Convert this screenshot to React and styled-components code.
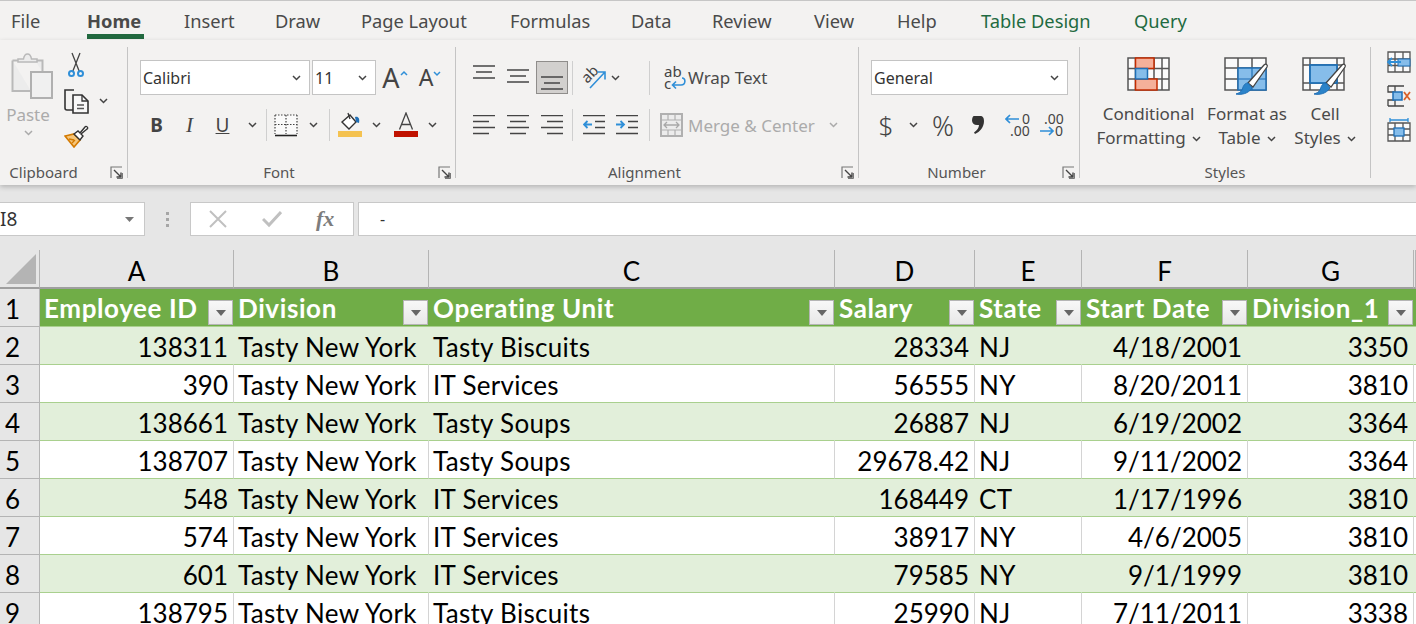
import React from "react"
import styled, { createGlobalStyle } from "styled-components"

const GlobalStyle = createGlobalStyle`
  html, body {
    margin: 0;
    padding: 0;
    background: #fff;
  }
  body {
    font-family: "Noto Sans", "Open Sans", sans-serif;
  }
`

const ink = "#444"
const blue = "#2f8fd8"

const Page = styled.div`
  width: 1416px;
  height: 624px;
  overflow: hidden;
  display: flex;
  flex-direction: column;
`

/* tabs */

const TabBar = styled.nav`
  flex: none;
  display: flex;
  height: 38px;
  padding-top: 1px;
  padding-left: 11px;
  background: #f3f2f1;
  border-top: 1px solid #c6c6c6;
`

const Tab = styled.div`
  position: relative;
  width: ${({ $w }) => $w}px;
  flex: none;
  font-size: 18.3px;
  line-height: 38px;
  height: 38px;
  white-space: nowrap;
  color: ${({ $green }) => ($green ? "#1f6b41" : "#4a4a4a")};
  font-weight: ${({ $active }) => ($active ? 700 : 400)};

  ${({ $active }) =>
    $active &&
    `&::after {
      content: "";
      position: absolute;
      left: 0;
      top: 32px;
      width: 57px;
      height: 5px;
      background: #21693f;
    }`}
`

/* ribbon */

const Ribbon = styled.div`
  flex: none;
  display: flex;
  height: 145px;
  background: #f3f2f1;
  position: relative;
  z-index: 2;
  box-shadow: 0 2px 5px rgba(0, 0, 0, 0.22);
`

const Group = styled.section`
  position: relative;
  flex: none;
  width: ${({ $w }) => $w}px;
  height: 131px;
  margin-top: 7px;
  display: flex;
  flex-direction: column;
  border-right: ${({ $last }) => ($last ? "none" : "1px solid #c4c4c4")};
  box-sizing: border-box;
`

const GroupBody = styled.div`
  flex: 1;
  display: flex;
  min-height: 0;
  padding-left: ${({ $pl }) => $pl || 0}px;
`

const GroupLabel = styled.div`
  height: 20px;
  margin-bottom: -4px;
  padding-right: ${({ $pr }) => $pr || 0}px;
  font-size: 15px;
  line-height: 20px;
  text-align: center;
  color: #555;
`

const Launcher = styled.span`
  position: absolute;
  right: 4px;
  top: 119px;
  display: flex;
`

const Stack = styled.div`
  display: flex;
  flex-direction: column;
  padding-top: ${({ $pt }) => $pt || 0}px;
  padding-left: ${({ $pl }) => $pl || 0}px;
  margin-top: ${({ $mt }) => $mt || 0}px;
`

const Row = styled.div`
  display: flex;
  align-items: center;
  height: ${({ $h }) => $h}px;
  margin-bottom: ${({ $mb }) => $mb || 0}px;
`

const Slot = styled.div`
  flex: none;
  width: ${({ $w }) => $w}px;
  display: flex;
  align-items: center;
  justify-content: center;
  color: ${ink};

  svg {
    flex: none;
  }
`

const Pressed = styled(Slot)`
  height: 33px;
  background: #d2d0ce;
  box-sizing: border-box;
  border: 1px solid #8f8d8b;
`

const RuleV = styled.div`
  flex: none;
  width: 1px;
  height: ${({ $h }) => $h || 32}px;
  background: #cfcfcf;
`

const ComboBox = styled.div`
  flex: none;
  width: ${({ $w }) => $w}px;
  height: 35px;
  margin-right: ${({ $mr }) => $mr || 0}px;
  box-sizing: border-box;
  background: #fff;
  border: 1px solid #c4c4c4;
  display: flex;
  align-items: center;
  justify-content: space-between;
  padding: 0 8px 0 2px;
  font-size: 16px;
  color: #333;
`

const RibbonText = styled.span`
  flex: none;
  margin-left: ${({ $ml }) => $ml || 0}px;
  font-size: 17px;
  color: ${({ $muted }) => ($muted ? "#ababab" : "#4a4a4a")};
  white-space: nowrap;
  line-height: 1;
`

const FontGlyph = styled.span`
  font-family: ${({ $serif }) => ($serif ? '"Liberation Serif", serif' : '"Noto Sans", sans-serif')};
  font-size: ${({ $size }) => $size}px;
  font-weight: ${({ $bold, $light }) => ($bold ? 700 : $light ? 300 : 400)};
  font-style: ${({ $italic }) => ($italic ? "italic" : "normal")};
  text-decoration: ${({ $under }) => ($under ? "underline" : "none")};
  color: #444;
  line-height: 1;
`

const PasteColumn = styled.div`
  flex: none;
  width: 56px;
  display: flex;
  flex-direction: column;
  align-items: center;
  padding-top: 6px;
  gap: 7px;
`

const PasteGlyph = styled.div`
  display: flex;
  margin-left: 8px;
`

const BigButton = styled.div`
  flex: none;
  width: ${({ $w }) => $w}px;
  display: flex;
  flex-direction: column;
  align-items: center;
  padding-top: 10px;
`

const BigLabel = styled.div`
  margin-top: ${({ $mt }) => $mt}px;
  font-size: 17px;
  line-height: 24px;
  color: #4a4a4a;
  text-align: center;
  white-space: nowrap;
`

const InlineChevron = styled.span`
  display: inline-flex;
  margin-left: 6px;
  vertical-align: 2px;
  line-height: 0;
`

/* formula bar */

const FormulaBar = styled.div`
  flex: none;
  display: flex;
  align-items: center;
  height: 65px;
  padding-top: 3px;
  box-sizing: border-box;
  background: #e6e6e6;
`

const NameBox = styled.div`
  flex: none;
  width: 146px;
  height: 34px;
  margin-left: -1px;
  box-sizing: border-box;
  background: #fff;
  border: 1px solid #c8c8c8;
  display: flex;
  align-items: center;
  justify-content: space-between;
  padding: 0 10px 0 0;
  font-size: 19px;
  color: #333;
`

const GripDots = styled.div`
  flex: none;
  width: 45px;
  display: flex;
  flex-direction: column;
  align-items: center;
  gap: 3px;

  i {
    width: 3px;
    height: 3px;
    background: #a6a6a6;
  }
`

const FxBox = styled.div`
  flex: none;
  width: 164px;
  height: 34px;
  box-sizing: border-box;
  background: #fff;
  border: 1px solid #c8c8c8;
  display: flex;
  align-items: center;
  padding-left: 17px;
  gap: 34px;
`

const FxGlyph = styled.span`
  font-family: "Liberation Serif", serif;
  font-style: italic;
  font-weight: 700;
  font-size: 22px;
  color: #7d7d7d;
`

const FormulaInput = styled.div`
  flex: 1;
  height: 34px;
  margin-left: 4px;
  box-sizing: border-box;
  background: #fff;
  border: 1px solid #c8c8c8;
  border-right: none;
  padding-left: 21px;
  font-size: 16px;
  line-height: 32px;
  color: #333;
`

/* sheet */

const Sheet = styled.div`
  flex: none;
  display: grid;
  grid-template-columns: 40px 194px 195px 406px 140px 107px 166px 166px 2px;
  grid-template-rows: 39px;
  grid-auto-rows: 38px;
  font-family: "Lato", "Noto Sans", sans-serif;
  font-size: 26px;
  color: #000;
  background: #fff;
`

const Corner = styled.div`
  background: #e6e6e6;
  border-right: 1px solid #b4b4b4;
  border-bottom: 2px solid #9f9f9f;
  box-sizing: border-box;
  display: flex;
  align-items: flex-end;
  justify-content: flex-end;
  padding: 0 3px 3px 0;
`

const ColHead = styled.div`
  background: #e6e6e6;
  border-right: 1px solid #b4b4b4;
  border-bottom: 2px solid #9f9f9f;
  box-sizing: border-box;
  text-align: center;
  line-height: 42px;
`

const RowHead = styled.div`
  background: #e6e6e6;
  border-right: 1px solid #b4b4b4;
  border-bottom: 1px solid #b4b4b4;
  box-sizing: border-box;
  padding-right: 14px;
  text-align: center;
  line-height: 40px;
`

const HeadCell = styled.div`
  background: #70ad47;
  color: #fff;
  font-weight: 700;
  letter-spacing: 0.6px;
  box-sizing: border-box;
  padding-left: 4px;
  display: flex;
  align-items: center;
  justify-content: space-between;
  white-space: nowrap;
  overflow: hidden;
  border-bottom: 1px solid #a9d08e;
  padding-right: 1px;
`

const FilterButton = styled.span`
  flex: none;
  width: 25px;
  height: 25px;
  margin-top: 10px;
  box-sizing: border-box;
  background: linear-gradient(#f8f8f8, #e8e8e8);
  border: 1px solid #b5b5b5;
  display: flex;
  align-items: center;
  justify-content: center;

  &::after {
    content: "";
    border-left: 5px solid transparent;
    border-right: 5px solid transparent;
    border-top: 6px solid #666;
  }
`

const Cell = styled.div`
  box-sizing: border-box;
  padding: 0 5px 0 4px;
  line-height: 40px;
  white-space: nowrap;
  overflow: hidden;
  letter-spacing: ${({ $num }) => ($num ? "0" : "0.3px")};
  text-align: ${({ $num }) => ($num ? "right" : "left")};
  background: ${({ $band }) => ($band ? "#e2efda" : "#fff")};
  border-bottom: 1px solid #a9d08e;
  border-right: 1px solid ${({ $band }) => ($band ? "#e2efda" : "#d4d4d4")};
`

/* icons */

const Chevron = ({ color = "#444", w = 9 }) => (
  <svg width={w} height="6" viewBox="0 0 9 6">
    <path d="M1 1l3.5 3.5L8 1" fill="none" stroke={color} strokeWidth="1.5" />
  </svg>
)

const LauncherIcon = () => (
  <svg width="13" height="13" viewBox="0 0 13 13">
    <path d="M1 12V1h11" fill="none" stroke="#777" strokeWidth="1.2" />
    <path d="M4 4l7 7M11 6.5V11H6.5" fill="none" stroke="#444" strokeWidth="1.4" />
    <path d="M12.5 7v5.5H7" fill="none" stroke="#777" strokeWidth="1" />
  </svg>
)

const PasteIcon = () => (
  <svg width="43" height="46" viewBox="0 0 43 46">
    <path d="M1.5 7.5h7M24 7.5h7.5V19M20 38H1.5V7.5" fill="#ececec" stroke="#b9b9b9" strokeWidth="2" />
    <path d="M7 9V6h5.5C13 3 14.5 1 16.5 1S20 3 20.5 6H26v3z" fill="#ececec" stroke="#b9b9b9" strokeWidth="1.5" />
    <rect x="20" y="19" width="21" height="26" fill="#f0f0f0" stroke="#b0b0b0" strokeWidth="2" />
  </svg>
)

const ScissorsIcon = () => (
  <svg width="18" height="26" viewBox="0 0 18 26">
    <path d="M5 1l7.5 19M13 1L5.5 20" fill="none" stroke="#444" strokeWidth="1.3" />
    <circle cx="4.5" cy="21.5" r="2.5" fill="none" stroke={blue} strokeWidth="2" />
    <circle cx="13.5" cy="21.5" r="2.5" fill="none" stroke={blue} strokeWidth="2" />
  </svg>
)

const CopyIcon = () => (
  <svg width="26" height="25" viewBox="0 0 26 25">
    <path d="M10 1H1v18a2 2 0 0 0 2 2h6" fill="none" stroke="#333" strokeWidth="1.6" />
    <path d="M9 6h9l6 6v12H9z" fill="#f8f8f8" stroke="#333" strokeWidth="1.6" />
    <path d="M18 6v6h6" fill="none" stroke="#333" strokeWidth="1.3" />
    <path d="M13 16h7M13 19.5h7" stroke="#555" strokeWidth="1.5" />
  </svg>
)

const BrushIcon = () => (
  <svg width="26" height="24" viewBox="0 0 26 24">
    <path d="M1 12l9 11 6-7-6-6z" fill="#f6c67a" stroke="#d47a00" strokeWidth="1.6" />
    <path d="M5 15l5 1M8 19l3-3" stroke="#d47a00" strokeWidth="1.3" />
    <path d="M10 10l4-3 5 5-3 4z" fill="#fff" stroke="#333" strokeWidth="1.4" />
    <path d="M16 9l5-6c1-2 4 1 2 2l-6 5" fill="#fff" stroke="#333" strokeWidth="1.4" />
  </svg>
)

const BordersIcon = () => (
  <svg width="24" height="24" viewBox="0 0 24 24">
    <rect x="1" y="2" width="22" height="20" fill="#fafafa" />
    <path d="M1 2h22M1 2v19M23 2v19M1 11.5h22M12 2v19" fill="none" stroke="#444" strokeWidth="1.2" strokeDasharray="1.5 1.5" />
    <path d="M1 22.5h22" stroke="#222" strokeWidth="1.6" />
  </svg>
)

const FillIcon = () => (
  <svg width="26" height="26" viewBox="0 0 26 26">
    <path d="M5 10l8-7 6 7-7 7z" fill="#fff" stroke="#333" strokeWidth="1.4" />
    <path d="M11 1l2 6" stroke="#333" strokeWidth="1.3" />
    <path d="M18 5c3-1 5 1 4 6l-3-1z" fill="#1f6fb5" />
    <rect x="1" y="19" width="24" height="6" fill="#f4c250" />
  </svg>
)

const FontColorIcon = () => (
  <svg width="26" height="26" viewBox="0 0 26 26">
    <path d="M6.5 17.5L13 1l6.5 16.5M8.5 12.5h9" fill="none" stroke="#444" strokeWidth="1.3" />
    <rect x="1" y="19" width="24" height="6" fill="#c01200" />
  </svg>
)

const Lines = ({ rows, h = 20 }) => (
  <svg width="22" height={h} viewBox={`0 0 22 ${h}`}>
    {rows.map(([x1, x2, y], i) => (
      <path key={i} d={`M${x1} ${y}H${x2}`} stroke="#444" strokeWidth="1.5" />
    ))}
  </svg>
)

const OrientationIcon = () => (
  <svg width="28" height="28" viewBox="0 0 28 28">
    <text x="0" y="15" fontFamily="Noto Sans, sans-serif" fontSize="15" fill="#444" transform="rotate(-45 9 10)">ab</text>
    <path d="M9 24L24 8M16.5 8H24v7.5" fill="none" stroke={blue} strokeWidth="1.6" />
  </svg>
)

const IndentIcon = ({ out }) => (
  <svg width="22" height="20" viewBox="0 0 22 20">
    <path d="M0 .5h22M12 6.5h10M12 12.5h10M0 18.5h22" stroke="#444" strokeWidth="1.5" />
    <path d={out ? "M9 9.5H1M4.5 6L1 9.5 4.5 13" : "M0 9.5h8M4.5 6L8 9.5 4.5 13"} fill="none" stroke={blue} strokeWidth="1.8" />
  </svg>
)

const WrapIcon = () => (
  <svg width="24" height="26" viewBox="0 0 24 26">
    <text x="1" y="12" fontFamily="Noto Sans, sans-serif" fontSize="15" fill="#444">ab</text>
    <text x="1" y="24" fontFamily="Noto Sans, sans-serif" fontSize="15" fill="#444">c</text>
    <path d="M19 13c4 0 4 7-1 7h-8M13 16.5L9.5 20l3.5 3.500" fill="none" stroke={blue} strokeWidth="1.6" />
  </svg>
)

const MergeIcon = () => (
  <svg width="23" height="24" viewBox="0 0 23 24">
    <rect x="1" y="1" width="21" height="22" fill="#ececec" stroke="#b0b0b0" strokeWidth="2" />
    <path d="M1 7h21M1 17h21M8 1v6M15 1v6M8 17v6M15 17v6" stroke="#b0b0b0" strokeWidth="1.2" />
    <path d="M4 12h15M7 9l-3 3 3 3M16 9l3 3-3 3" fill="none" stroke="#a8a8a8" strokeWidth="1.3" />
  </svg>
)

const CommaIcon = () => (
  <svg width="14" height="20" viewBox="0 0 14 20">
    <path d="M3 1h6c3 0 4 2 4 5 0 6-4 11-9 13l-1-1.5c3-2 5-5 5-7.500H6C3 10 1 8 1 5.500S2 1 3 1z" fill="#333" />
  </svg>
)

const DecimalIcon = ({ more }) => (
  <svg width="26" height="26" viewBox="0 0 26 26">
    <text x={more ? 5 : 17} y="12" fontFamily="Noto Sans, sans-serif" fontSize="14" fill="#444">{more ? ".00" : "0"}</text>
    <text x={more ? 16 : 5} y="24" fontFamily="Noto Sans, sans-serif" fontSize="14" fill="#444">{more ? "0" : ".00"}</text>
    {more ? (
      <path d="M1 19h13M10 15l4 4-4 4" fill="none" stroke={blue} strokeWidth="1.7" />
    ) : (
      <path d="M14 7H1M5 3L1 7l4 4" fill="none" stroke={blue} strokeWidth="1.7" />
    )}
  </svg>
)

const GridFrame = ({ w, h, xs, ys }) => (
  <g fill="none" stroke="#555" strokeWidth="1.5">
    <rect x="1" y="1" width={w} height={h} fill="#fafafa" />
    {xs.map((x) => (
      <path key={x} d={`M${x} 1v${h}`} />
    ))}
    {ys.map((y) => (
      <path key={y} d={`M1 ${y}h${w}`} />
    ))}
  </g>
)

const PaintBrush = () => (
  <g>
    <path d="M24 26L40 8c2-2 4 0 3 2L29 30z" fill="#fff" stroke="#444" strokeWidth="1.3" />
    <path d="M12 37c5 1 12 0 16-6l-4-5c-4 0-5 4-6 7-1 2-3 3-6 4z" fill="#2b83c9" stroke="#1f6fb5" />
  </g>
)

const ConditionalIcon = () => (
  <svg width="44" height="36" viewBox="0 0 44 36">
    <GridFrame w={41} h={32} xs={[8.5, 27, 35]} ys={[11.5, 22]} />
    <rect x="8.5" y="1" width="18.5" height="10.5" fill="#f5b09a" stroke="#c22b00" strokeWidth="1.5" />
    <rect x="8.5" y="22" width="21.5" height="11" fill="#f5b09a" stroke="#c22b00" strokeWidth="1.5" />
    <rect x="8.5" y="11.5" width="12" height="10.5" fill="#86bdea" stroke="#1f6fb5" strokeWidth="1.5" />
  </svg>
)

const FormatTableIcon = () => (
  <svg width="46" height="42" viewBox="0 0 46 42">
    <GridFrame w={41} h={32} xs={[14, 28]} ys={[11, 22]} />
    <rect x="14" y="11" width="28" height="22" fill="#86bdea" stroke="#1f6fb5" strokeWidth="1.5" />
    <path d="M14 22h28M28 11v22" stroke="#1f6fb5" strokeWidth="1.2" />
    <PaintBrush />
  </svg>
)

const CellStylesIcon = () => (
  <svg width="46" height="42" viewBox="0 0 46 42">
    <GridFrame w={41} h={32} xs={[8, 35]} ys={[8, 26]} />
    <rect x="8" y="8" width="27" height="18" fill="#86bdea" stroke="#1f6fb5" strokeWidth="1.8" />
    <PaintBrush />
  </svg>
)

const InsertCellsIcon = () => (
  <svg width="24" height="22" viewBox="0 0 24 22">
    <path d="M1 1h22v20H1zM1 8h22M1 14.5h22M8 1v20M16 1v20" fill="#fafafa" stroke="#555" strokeWidth="1.3" />
    <rect x="11" y="8" width="12" height="7" fill="#86bdea" stroke="#1f6fb5" />
    <path d="M14 11H1M5 7l-4 4 4 4" fill="none" stroke={blue} strokeWidth="1.8" />
  </svg>
)

const DeleteCellsIcon = () => (
  <svg width="24" height="22" viewBox="0 0 24 22">
    <path d="M1 1h16M1 21h16M1 1v6h6M1 21v-6h6M8 1v6M8 15v6" fill="none" stroke="#444" strokeWidth="1.3" />
    <rect x="6" y="7" width="9" height="8" fill="#86bdea" stroke="#1f6fb5" strokeWidth="1.5" />
    <path d="M17 7l6 8M23 7l-6 8" stroke="#d9622b" strokeWidth="1.8" />
  </svg>
)

const FormatCellsIcon = () => (
  <svg width="24" height="24" viewBox="0 0 24 24">
    <path d="M1 5h22v18H1zM1 11h22M1 17h22M8 5v18M16 5v18" fill="#fafafa" stroke="#555" strokeWidth="1.3" />
    <rect x="7" y="10" width="10" height="8" fill="#86bdea" stroke="#1f6fb5" strokeWidth="1.3" />
    <path d="M3 2h18M3 0v4M21 0v4" stroke={blue} strokeWidth="1.3" />
  </svg>
)

const CancelIcon = () => (
  <svg width="20" height="18" viewBox="0 0 20 18">
    <path d="M2 1l16 16M18 1L2 17" stroke="#c0c0c0" strokeWidth="2" />
  </svg>
)

const EnterIcon = () => (
  <svg width="20" height="18" viewBox="0 0 20 18">
    <path d="M1 9l6 6L19 2" fill="none" stroke="#c0c0c0" strokeWidth="3" />
  </svg>
)

const CornerTriangle = () => (
  <svg width="30" height="30" viewBox="0 0 30 30">
    <path d="M30 0v30H0z" fill="#b4b4b4" />
  </svg>
)

const NameArrow = () => (
  <svg width="9" height="5" viewBox="0 0 9 5">
    <path d="M0 0h9L4.5 5z" fill="#777" />
  </svg>
)

/* data */

const tabs = [
  ["File", 76],
  ["Home", 97, "active"],
  ["Insert", 91],
  ["Draw", 86],
  ["Page Layout", 149],
  ["Formulas", 121],
  ["Data", 81],
  ["Review", 102],
  ["View", 83],
  ["Help", 84],
  ["Table Design", 153, "green"],
  ["Query", 90, "green"],
]

const columns = ["A", "B", "C", "D", "E", "F", "G"]

const headers = ["Employee ID", "Division", "Operating Unit", "Salary", "State", "Start Date", "Division_1"]

const rows = [
  ["138311", "Tasty Biscuits", "28334", "NJ", "4/18/2001", "3350"],
  ["390", "IT Services", "56555", "NY", "8/20/2011", "3810"],
  ["138661", "Tasty Soups", "26887", "NJ", "6/19/2002", "3364"],
  ["138707", "Tasty Soups", "29678.42", "NJ", "9/11/2002", "3364"],
  ["548", "IT Services", "168449", "CT", "1/17/1996", "3810"],
  ["574", "IT Services", "38917", "NY", "4/6/2005", "3810"],
  ["601", "IT Services", "79585", "NY", "9/1/1999", "3810"],
  ["138795", "Tasty Biscuits", "25990", "NJ", "7/11/2011", "3338"],
]

const alignTop = [[0, 22, 5], [3, 19, 11], [0, 22, 17]]
const alignMid = [[0, 22, 9], [3, 19, 15], [0, 22, 21]]
const alignBot = [[0, 22, 15], [3, 19, 21], [0, 22, 27]]
const hLeft = [[0, 22, 0.5], [0, 16, 6.5], [0, 22, 12.5], [0, 16, 18.5]]
const hCenter = [[0, 22, 0.5], [3, 19, 6.5], [0, 22, 12.5], [3, 19, 18.5]]
const hRight = [[0, 22, 0.5], [6, 22, 6.5], [0, 22, 12.5], [6, 22, 18.5]]

const App = () => {
  return (
    <Page>
      <GlobalStyle />
      <TabBar>
        {tabs.map(([name, w, kind]) => (
          <Tab key={name} $w={w} $active={kind === "active"} $green={kind === "green"}>
            {name}
          </Tab>
        ))}
      </TabBar>

      <Ribbon>
        <Group $w={128}>
          <GroupBody>
            <PasteColumn>
              <PasteGlyph>
                <PasteIcon />
              </PasteGlyph>
              <RibbonText $muted>Paste</RibbonText>
              <Chevron color="#aaa" />
            </PasteColumn>
            <Stack $pl={8}>
              <Row $h={36}>
                <Slot $w={24}>
                  <ScissorsIcon />
                </Slot>
              </Row>
              <Row $h={36}>
                <Slot $w={26}>
                  <CopyIcon />
                </Slot>
                <Slot $w={26}>
                  <Chevron />
                </Slot>
              </Row>
              <Row $h={34}>
                <Slot $w={26}>
                  <BrushIcon />
                </Slot>
              </Row>
            </Stack>
          </GroupBody>
          <GroupLabel $pr={40}>Clipboard</GroupLabel>
          <Launcher>
            <LauncherIcon />
          </Launcher>
        </Group>

        <Group $w={328}>
          <GroupBody $pl={12}>
            <Stack $pt={13}>
              <Row $h={35} $mb={15}>
                <ComboBox $w={170} $mr={2}>
                  Calibri
                  <Chevron />
                </ComboBox>
                <ComboBox $w={64}>
                  11
                  <Chevron />
                </ComboBox>
                <Slot $w={38}>
                  <FontGlyph $size={27}>A</FontGlyph>
                  <svg width="8" height="16" viewBox="0 0 8 16">
                    <path d="M1 5l3-3 3 3" fill="none" stroke={blue} strokeWidth="1.5" />
                  </svg>
                </Slot>
                <Slot $w={32}>
                  <FontGlyph $size={23}>A</FontGlyph>
                  <svg width="8" height="16" viewBox="0 0 8 16">
                    <path d="M1 2l3 3 3-3" fill="none" stroke={blue} strokeWidth="1.5" />
                  </svg>
                </Slot>
              </Row>
              <Row $h={30}>
                <Slot $w={33}>
                  <FontGlyph $size={19} $bold>B</FontGlyph>
                </Slot>
                <Slot $w={33}>
                  <FontGlyph $size={21} $italic $serif>I</FontGlyph>
                </Slot>
                <Slot $w={33}>
                  <FontGlyph $size={19} $under>U</FontGlyph>
                </Slot>
                <Slot $w={27}>
                  <Chevron />
                </Slot>
                <RuleV />
                <Slot $w={38}>
                  <BordersIcon />
                </Slot>
                <Slot $w={16}>
                  <Chevron />
                </Slot>
                <Slot $w={8} />
                <RuleV />
                <Slot $w={40}>
                  <FillIcon />
                </Slot>
                <Slot $w={12}>
                  <Chevron />
                </Slot>
                <Slot $w={8} />
                <Slot $w={32}>
                  <FontColorIcon />
                </Slot>
                <Slot $w={20}>
                  <Chevron />
                </Slot>
              </Row>
            </Stack>
          </GroupBody>
          <GroupLabel $pr={25}>Font</GroupLabel>
          <Launcher>
            <LauncherIcon />
          </Launcher>
        </Group>

        <Group $w={403}>
          <GroupBody $pl={11}>
            <Stack $pt={13}>
              <Row $h={35} $mb={15}>
                <Slot $w={34}>
                  <Lines h={33} rows={alignTop} />
                </Slot>
                <Slot $w={34}>
                  <Lines h={33} rows={alignMid} />
                </Slot>
                <Slot $w={1} />
                <Pressed $w={32}>
                  <Lines h={31} rows={alignBot} />
                </Pressed>
                <Slot $w={4} />
                <RuleV $h={34} />
                <Slot $w={8} />
                <Slot $w={28}>
                  <OrientationIcon />
                </Slot>
                <Slot $w={12}>
                  <Chevron />
                </Slot>
                <Slot $w={28} />
                <RuleV $h={34} />
                <Slot $w={13} />
                <WrapIcon />
                <RibbonText $ml={1}>Wrap Text</RibbonText>
              </Row>
              <Row $h={30}>
                <Slot $w={34}>
                  <Lines rows={hLeft} />
                </Slot>
                <Slot $w={34}>
                  <Lines rows={hCenter} />
                </Slot>
                <Slot $w={34}>
                  <Lines rows={hRight} />
                </Slot>
                <Slot $w={3} />
                <RuleV />
                <Slot $w={42}>
                  <IndentIcon out />
                </Slot>
                <Slot $w={24}>
                  <IndentIcon />
                </Slot>
                <Slot $w={10} />
                <RuleV />
                <Slot $w={10} />
                <MergeIcon />
                <RibbonText $muted $ml={5}>Merge &amp; Center</RibbonText>
                <Slot $w={38}>
                  <Chevron color="#aaa" />
                </Slot>
              </Row>
            </Stack>
          </GroupBody>
          <GroupLabel $pr={25}>Alignment</GroupLabel>
          <Launcher>
            <LauncherIcon />
          </Launcher>
        </Group>

        <Group $w={221}>
          <GroupBody $pl={12}>
            <Stack $pt={13}>
              <Row $h={35} $mb={15}>
                <ComboBox $w={197}>
                  General
                  <Chevron />
                </ComboBox>
              </Row>
              <Row $h={30}>
                <Slot $w={30}>
                  <FontGlyph $size={26} $light>$</FontGlyph>
                </Slot>
                <Slot $w={24}>
                  <Chevron />
                </Slot>
                <Slot $w={36}>
                  <FontGlyph $size={27} $light>%</FontGlyph>
                </Slot>
                <Slot $w={34}>
                  <CommaIcon />
                </Slot>
                <Slot $w={8} />
                <Slot $w={30}>
                  <DecimalIcon />
                </Slot>
                <Slot $w={38}>
                  <DecimalIcon more />
                </Slot>
              </Row>
            </Stack>
          </GroupBody>
          <GroupLabel $pr={25}>Number</GroupLabel>
          <Launcher>
            <LauncherIcon />
          </Launcher>
        </Group>

        <Group $w={291}>
          <GroupBody $pl={14}>
            <BigButton $w={109}>
              <ConditionalIcon />
              <BigLabel $mt={9}>
                Conditional
                <br />
                Formatting
                <InlineChevron>
                  <Chevron />
                </InlineChevron>
              </BigLabel>
            </BigButton>
            <BigButton $w={88}>
              <FormatTableIcon />
              <BigLabel $mt={3}>
                Format as
                <br />
                Table
                <InlineChevron>
                  <Chevron />
                </InlineChevron>
              </BigLabel>
            </BigButton>
            <BigButton $w={68}>
              <CellStylesIcon />
              <BigLabel $mt={3}>
                Cell
                <br />
                Styles
                <InlineChevron>
                  <Chevron />
                </InlineChevron>
              </BigLabel>
            </BigButton>
          </GroupBody>
          <GroupLabel>Styles</GroupLabel>
        </Group>

        <Group $w={45} $last>
          <GroupBody $pl={16}>
            <Stack $mt={-2}>
              <Row $h={34}>
                <InsertCellsIcon />
              </Row>
              <Row $h={34}>
                <DeleteCellsIcon />
              </Row>
              <Row $h={34}>
                <FormatCellsIcon />
              </Row>
            </Stack>
          </GroupBody>
        </Group>
      </Ribbon>

      <FormulaBar>
        <NameBox>
          I8
          <NameArrow />
        </NameBox>
        <GripDots>
          <i />
          <i />
          <i />
        </GripDots>
        <FxBox>
          <CancelIcon />
          <EnterIcon />
          <FxGlyph>fx</FxGlyph>
        </FxBox>
        <FormulaInput>-</FormulaInput>
      </FormulaBar>

      <Sheet>
        <Corner>
          <CornerTriangle />
        </Corner>
        {columns.map((c) => (
          <ColHead key={c}>{c}</ColHead>
        ))}
        <ColHead />

        <RowHead>1</RowHead>
        {headers.map((h) => (
          <HeadCell key={h}>
            {h}
            <FilterButton />
          </HeadCell>
        ))}
        <HeadCell />

        {rows.map((r, i) => {
          const band = i % 2 === 0
          return (
            <React.Fragment key={r[0]}>
              <RowHead>{i + 2}</RowHead>
              <Cell $band={band} $num>{r[0]}</Cell>
              <Cell $band={band}>Tasty New York</Cell>
              <Cell $band={band}>{r[1]}</Cell>
              <Cell $band={band} $num>{r[2]}</Cell>
              <Cell $band={band}>{r[3]}</Cell>
              <Cell $band={band} $num>{r[4]}</Cell>
              <Cell $band={band} $num>{r[5]}</Cell>
              <Cell $band={band} />
            </React.Fragment>
          )
        })}
      </Sheet>
    </Page>
  )
}

export default App
